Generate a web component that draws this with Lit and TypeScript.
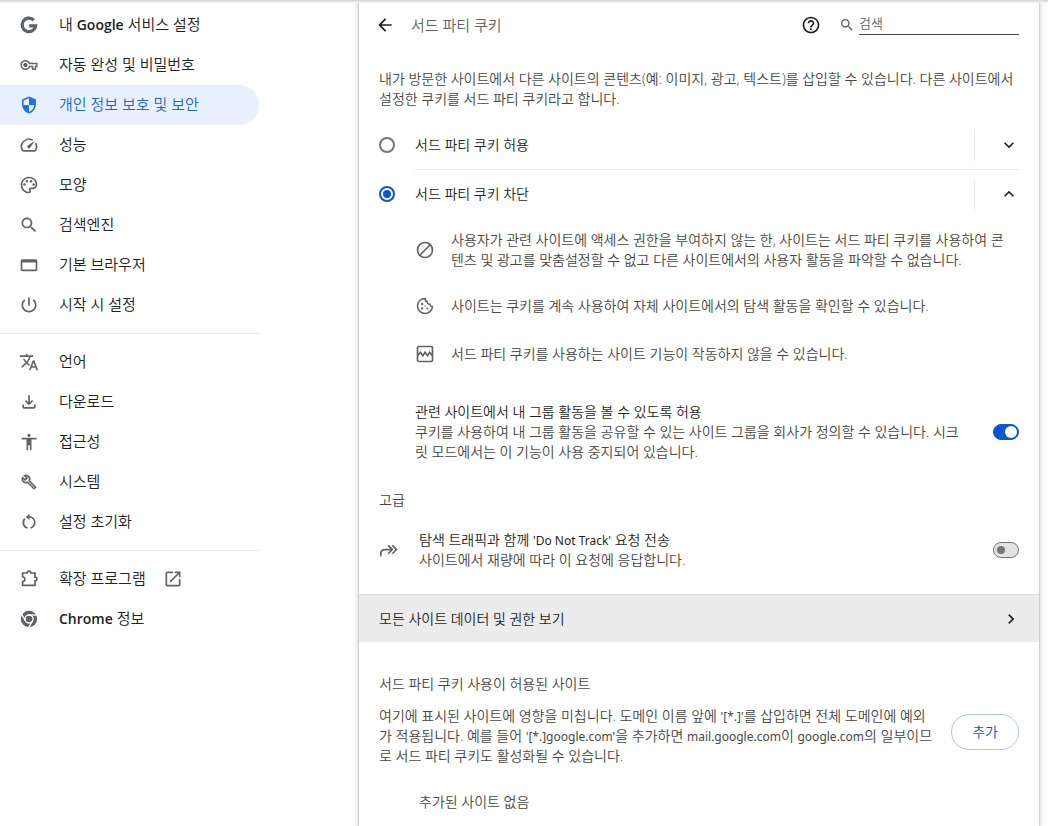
import { LitElement, html, css, svg } from "lit";
import { customElement, property, state } from "lit/decorators.js";
import { classMap } from "lit/directives/class-map.js";

const line = (d: string, width = 2) =>
  svg`<path d=${d} fill="none" stroke="currentColor" stroke-width=${width} />`;
const fill = (d: string) => svg`<path d=${d} fill="currentColor" fill-rule="evenodd" />`;

const ICONS: Record<string, { box?: string; art: unknown }> = {
  google: { art: line("M17.8 6.2A8.1 8.1 0 1 0 20 13H12.2", 3.8) },
  key: {
    box: "-2 -2 28 28",
    art: fill(
      "M22 19h-6v-4h-2.68c-1.14 2.42-3.6 4-6.32 4-3.86 0-7-3.14-7-7s3.14-7 7-7c2.72 0 5.17 1.58 6.32 4H24v6h-2v4zm-4-2h2v-4h2v-2H11.94l-.23-.67C11.01 8.34 9.11 7 7 7c-2.76 0-5 2.24-5 5s2.24 5 5 5c2.11 0 4.01-1.34 4.71-3.33l.23-.67H18v4zM7 15c-1.65 0-3-1.35-3-3s1.35-3 3-3 3 1.35 3 3-1.35 3-3 3z"
    ),
  },
  shield: {
    box: "-1 -1 26 26",
    art: fill(
      "M12 1L3 5v6c0 5.55 3.84 10.74 9 12 5.16-1.26 9-6.45 9-12V5l-9-4zm0 10.99h7c-.53 4.12-3.28 7.79-7 8.94V12H5V6.3l7-3.11v8.8z"
    ),
  },
  speed: {
    art: fill(
      "M20.38 8.57l-1.23 1.85a8 8 0 0 1-.22 7.58H5.07A8 8 0 0 1 15.58 6.85l1.85-1.23A10 10 0 0 0 3.35 19a2 2 0 0 0 1.72 1h13.85a2 2 0 0 0 1.74-1 10 10 0 0 0-.27-10.44zm-9.79 6.84a2 2 0 0 0 2.83 0l5.66-8.49-8.49 5.66a2 2 0 0 0 0 2.83z"
    ),
  },
  palette: {
    art: svg`${fill(
      "M12 22C6.49 22 2 17.51 2 12S6.49 2 12 2s10 4.04 10 9c0 3.31-2.69 6-6 6h-1.77c-.28 0-.5.22-.5.5 0 .12.05.23.13.33.41.47.64 1.06.64 1.67A2.5 2.5 0 0 1 12 22zm0-18c-4.41 0-8 3.59-8 8s3.59 8 8 8c.28 0 .5-.22.5-.5a.54.54 0 0 0-.14-.35c-.41-.46-.63-1.05-.63-1.65a2.5 2.5 0 0 1 2.5-2.5H16c2.21 0 4-1.79 4-4 0-3.86-3.59-7-8-7z"
    )}<g fill="currentColor"><circle cx="6.5" cy="11.5" r="1.5" /><circle cx="9.5" cy="7.5" r="1.5" /><circle cx="14.5" cy="7.5" r="1.5" /><circle cx="17.5" cy="11.5" r="1.5" /></g>`,
  },
  search: {
    art: fill(
      "M15.5 14h-.79l-.28-.27C15.41 12.59 16 11.11 16 9.5 16 5.91 13.09 3 9.5 3S3 5.91 3 9.5 5.91 16 9.5 16c1.61 0 3.09-.59 4.23-1.57l.27.28v.79l5 4.99L20.49 19l-4.99-5zm-6 0C7.01 14 5 11.99 5 9.5S7.01 5 9.5 5 14 7.01 14 9.5 11.99 14 9.5 14z"
    ),
  },
  browser: {
    art: fill(
      "M4 5c-1.1 0-2 .9-2 2v10.5c0 1.1.9 2 2 2h16c1.1 0 2-.9 2-2V7c0-1.1-.9-2-2-2H4zm0 4h16v8.5H4z"
    ),
  },
  power: {
    art: fill(
      "M13 3h-2v10h2V3zm4.83 2.17l-1.42 1.42C17.99 7.86 19 9.81 19 12c0 3.87-3.13 7-7 7s-7-3.13-7-7c0-2.19 1.01-4.14 2.58-5.42L6.17 5.17C4.23 6.82 3 9.26 3 12c0 4.97 4.03 9 9 9s9-4.03 9-9c0-2.74-1.23-5.18-3.17-6.83z"
    ),
  },
  translate: {
    art: fill(
      "M12.87 15.07l-2.54-2.51.03-.03c1.74-1.94 2.98-4.17 3.71-6.53H17V4h-7V2H8v2H1v1.99h11.17C11.5 7.92 10.44 9.75 9 11.35 8.07 10.32 7.3 9.19 6.69 8h-2c.73 1.63 1.73 3.17 2.98 4.56l-5.09 5.02L4 19l5-5 3.11 3.11.76-2.04zM18.5 10h-2L12 22h2l1.12-3h4.75L21 22h2l-4.5-12zm-2.62 7l1.62-4.33L19.12 17h-3.24z"
    ),
  },
  download: {
    art: fill(
      "M18 15v3H6v-3H4v3c0 1.1.9 2 2 2h12c1.1 0 2-.9 2-2v-3h-2zm-1-4l-1.41-1.41L13 12.17V4h-2v8.17L8.41 9.59 7 11l5 5 5-5z"
    ),
  },
  accessibility: {
    art: fill(
      "M12 2c1.1 0 2 .9 2 2s-.9 2-2 2-2-.9-2-2 .9-2 2-2zm9 7h-6v13h-2v-6h-2v6H9V9H3V7h18v2z"
    ),
  },
  wrench: {
    box: "-3 -3 30 30",
    art: svg`<path stroke="currentColor" stroke-width="0.6" fill="currentColor" d="M22.61 18.99l-9.08-9.08c.93-2.34.45-5.1-1.44-7C9.79.61 6.21.4 3.66 2.26L7.5 6.11 6.08 7.52 2.25 3.69C.39 6.23.6 9.82 2.9 12.11c1.86 1.86 4.57 2.35 6.89 1.48l9.11 9.11c.39.39 1.02.39 1.41 0l2.3-2.3c.4-.38.4-1.01 0-1.41zm-3 1.6l-9.46-9.46c-.61.45-1.29.72-2 .82-1.36.2-2.79-.21-3.83-1.25C3.37 9.76 2.93 8.5 3 7.26l3.09 3.09 4.24-4.24-3.09-3.09c1.24-.07 2.49.37 3.44 1.31 1.08 1.08 1.49 2.57 1.24 3.96-.12.71-.42 1.37-.88 1.96l9.45 9.45-.88.89z" />`,
  },
  reset: {
    art: svg`${line("M10.6 5.9A6.7 6.7 0 0 1 13.6 19.2M10.4 19.2A6.7 6.7 0 0 1 7 8")}${fill(
      "M12.5 2.2v7.4L8.2 5.9z"
    )}`,
  },
  extension: {
    art: line(
      "M4.3 4.8H9.6a2.3 2.3 0 0 1 4.6 0H19.2V9.7a2.3 2.3 0 0 1 0 4.6V19.7H4.3V15.2C8 14.8 8 9.7 4.3 9.3Z"
    ),
  },
  launch: {
    art: fill(
      "M19 19H5V5h7V3H5a2 2 0 0 0-2 2v14a2 2 0 0 0 2 2h14c1.1 0 2-.9 2-2v-7h-2v7zM14 3v2h3.59l-9.83 9.83 1.41 1.41L19 6.41V10h2V3h-7z"
    ),
  },
  chrome: {
    art: svg`<circle cx="12" cy="12" r="9.8" fill="currentColor" />
      <g fill="none" stroke="#fff" stroke-width="1.6">
        <circle cx="12" cy="12" r="4.8" />
        <path d="M12 7.2H21.5" /><path d="M12 7.2H21.5" transform="rotate(120 12 12)" /><path d="M12 7.2H21.5" transform="rotate(240 12 12)" />
      </g>`,
  },
  back: { art: fill("M20 11H7.83l5.59-5.59L12 4l-8 8 8 8 1.41-1.41L7.83 13H20v-2z") },
  help: {
    art: fill(
      "M11 18h2v-2h-2v2zm1-16C6.48 2 2 6.48 2 12s4.48 10 10 10 10-4.48 10-10S17.52 2 12 2zm0 18c-4.41 0-8-3.59-8-8s3.59-8 8-8 8 3.59 8 8-3.59 8-8 8zm0-14c-2.21 0-4 1.79-4 4h2c0-1.1.9-2 2-2s2 .9 2 2c0 2-3 1.75-3 5h2c0-2.25 3-2.5 3-5 0-2.21-1.79-4-4-4z"
    ),
  },
  down: { art: fill("M7.41 8.59L12 13.17l4.59-4.58L18 10l-6 6-6-6 1.41-1.41z") },
  up: { art: fill("M7.41 15.41L12 10.83l4.59 4.58L18 14l-6-6-6 6 1.41 1.41z") },
  right: { art: fill("M10 6L8.59 7.41 13.17 12l-4.58 4.59L10 18l6-6-6-6z") },
  block: {
    art: svg`<circle cx="12" cy="12" r="9" fill="none" stroke="currentColor" stroke-width="2" />${line(
      "M5.7 18.3L18.3 5.7"
    )}`,
  },
  cookie: {
    art: svg`${line(
      "M12.3 3A9 9 0 1 0 21 12.6C19 12.8 17.8 11.6 17.8 9.8 15.8 10 14.4 8.7 14.7 6.7 13 6.4 12 5 12.3 3Z",
      1.8
    )}<g fill="currentColor"><circle cx="8.5" cy="9.5" r="1.4" /><circle cx="8.5" cy="15" r="1.4" /><circle cx="14.8" cy="15" r="1.2" /><circle cx="12" cy="12" r="0.8" /></g>`,
  },
  broken: {
    art: svg`<rect x="3" y="3" width="18" height="18" rx="1.5" fill="none" stroke="currentColor" stroke-width="2" />${line(
      "M3 14l3.5-4 3 4 2.5-4 3 4 2.5-4L21 14"
    )}`,
  },
  forward: {
    art: line("M2.2 19.5V16a4.5 4.5 0 0 1 4.5-4.5H15.5M11 6.5l5 5-5 5M16 6.5l5 5-5 5"),
  },
};

const icon = (name: string, small = false) => html`<svg
  class=${classMap({ icon: true, small })}
  viewBox=${ICONS[name].box ?? "0 0 24 24"}
  aria-hidden="true"
>
  ${ICONS[name].art}
</svg>`;

const shared = css`
  * {
    box-sizing: border-box;
  }
  .icon {
    display: block;
    flex: none;
    width: 20px;
    height: 20px;
  }
  .icon.small {
    width: 16px;
    height: 16px;
  }
  .latin {
    font-family: "Noto Sans", sans-serif;
    font-size: 12px;
    font-weight: 400;
    line-height: 12px;
  }
`;

interface MenuItem {
  icon: string;
  label: unknown;
  active?: boolean;
  external?: boolean;
}

const MENU: MenuItem[][] = [
  [
    { icon: "google", label: html`내 <span class="name">Google</span> 서비스 설정` },
    { icon: "key", label: "자동 완성 및 비밀번호" },
    { icon: "shield", label: "개인 정보 보호 및 보안", active: true },
    { icon: "speed", label: "성능" },
    { icon: "palette", label: "모양" },
    { icon: "search", label: "검색엔진" },
    { icon: "browser", label: "기본 브라우저" },
    { icon: "power", label: "시작 시 설정" },
  ],
  [
    { icon: "translate", label: "언어" },
    { icon: "download", label: "다운로드" },
    { icon: "accessibility", label: "접근성" },
    { icon: "wrench", label: "시스템" },
    { icon: "reset", label: "설정 초기화" },
  ],
  [
    { icon: "extension", label: "확장 프로그램", external: true },
    { icon: "chrome", label: html`<span class="name">Chrome</span> 정보` },
  ],
];

@customElement("settings-menu")
export class SettingsMenu extends LitElement {
  static styles = [
    shared,
    css`
      :host {
        display: block;
      }
      .menu {
        max-width: 261px;
        padding-top: 5px;
      }
      .group + .group {
        margin-top: 8px;
        padding-top: 8px;
        border-top: 1px solid #e8e8e8;
      }
      .item {
        display: flex;
        align-items: center;
        height: 40px;
        margin-right: 2px;
        padding-left: 19px;
        border-radius: 0 20px 20px 0;
        color: #202124;
        font-size: 15px;
        text-decoration: none;
      }
      .item .icon {
        color: #5f6368;
      }
      .label {
        margin: 0 17px 0 20px;
        padding-bottom: 2px;
        white-space: nowrap;
      }
      .name {
        font-size: 14px;
        font-weight: 600;
      }
      .active {
        background: #e8f0fe;
        color: #1967d2;
      }
      .active .icon {
        color: #1a73e8;
      }
    `,
  ];

  render() {
    return html`<nav class="menu" aria-label="설정">
      ${MENU.map(
        (group) => html`<div class="group">
          ${group.map(
            (item) => html`<a
              href="#"
              class=${classMap({ item: true, active: !!item.active })}
              aria-current=${item.active ? "page" : "false"}
            >
              ${icon(item.icon)}
              <span class="label">${item.label}</span>
              ${item.external ? icon("launch") : ""}
            </a>`
          )}
        </div>`
      )}
    </nav>`;
  }
}

@customElement("cookie-option")
export class CookieOption extends LitElement {
  @property() label = "";
  @property({ type: Boolean }) checked = false;
  @property({ type: Boolean }) expanded = false;

  static styles = [
    shared,
    css`
      :host {
        display: flex;
        align-items: center;
        height: 48px;
      }
      .choice {
        display: flex;
        flex: 1;
        align-items: center;
        gap: 20px;
        color: #1f1f1f;
      }
      .radio {
        display: grid;
        flex: none;
        place-items: center;
        appearance: none;
        width: 16px;
        height: 16px;
        margin: 0;
        border: 2px solid #747775;
        border-radius: 50%;
      }
      .radio:checked {
        border-color: #0b57d0;
      }
      .radio:checked::before {
        content: "";
        width: 8px;
        height: 8px;
        border-radius: 50%;
        background: #0b57d0;
      }
      .expand {
        display: flex;
        align-items: center;
        justify-content: flex-end;
        width: 45px;
        height: 32px;
        padding: 0;
        border: 0;
        border-left: 1px solid #ebebeb;
        background: none;
        color: #1f1f1f;
      }
    `,
  ];

  render() {
    return html`<label class="choice">
        <input class="radio" type="radio" name="cookies" .checked=${this.checked} />
        <span>${this.label}</span>
      </label>
      <button class="expand" aria-label=${this.label} aria-expanded=${this.expanded}>
        ${icon(this.expanded ? "up" : "down")}
      </button>`;
  }
}

@customElement("app-root")
export class AppRoot extends LitElement {
  @state() private relatedSites = true;
  @state() private doNotTrack = false;

  static styles = [
    shared,
    css`
      :host {
        display: flex;
        position: relative;
        min-height: 100vh;
        padding-right: 9px;
        background: #fff;
        color: #474747;
        font-family: "Open Sans", "Noto Sans CJK KR", sans-serif;
        font-size: 14px;
        font-weight: 350;
        line-height: 20px;
      }
      :host::before {
        content: "";
        position: absolute;
        inset: 0 0 auto;
        height: 3px;
        background: linear-gradient(#d4d4d4, #f6f6f6);
      }
      settings-menu {
        flex: 1 0 266px;
      }
      .card {
        flex: 0 1 680px;
        box-shadow: 0 0 2px rgba(60, 64, 67, 0.5), 0 2px 6px 2px rgba(60, 64, 67, 0.15);
      }
      .header {
        display: flex;
        align-items: center;
        height: 50px;
        padding: 0 20px 0 16px;
      }
      .plain {
        padding: 0;
        border: 0;
        background: none;
        color: #1f1f1f;
      }
      .title {
        flex: 1;
        margin: 0 0 0 16px;
        color: #5f6368;
        font-size: 15px;
        font-weight: inherit;
      }
      .search {
        display: flex;
        align-items: center;
        gap: 4px;
        margin-left: 18px;
        color: #5f6368;
      }
      .field {
        width: 160px;
        height: 20px;
        padding: 0 0 4px;
        border: 0;
        border-bottom: 1px solid #474747;
        outline: 0;
        background: none;
        color: #1f1f1f;
        font: inherit;
        font-size: 13px;
      }
      .field::placeholder {
        color: #5f6368;
        opacity: 1;
      }
      .body {
        padding: 0 20px;
      }
      .text {
        margin: 0;
      }
      .intro {
        margin: 19px 0 12px;
      }
      .rule {
        height: 1px;
        margin: 0 0 0 36px;
        border: 0;
        background: #ebebeb;
      }
      .details {
        margin: 0;
        padding: 0 0 0 36px;
        list-style: none;
      }
      .detail {
        display: flex;
        align-items: center;
        gap: 16px;
        min-height: 48px;
        padding: 12px 8px 12px 0;
      }
      .detail .icon {
        color: #5f6368;
      }
      .setting {
        display: flex;
        align-items: center;
      }
      .related {
        padding: 24px 0 28px 36px;
      }
      .copy {
        flex: 1;
        margin-right: 28px;
      }
      .strong {
        display: block;
        color: #1f1f1f;
      }
      .sub {
        display: block;
      }
      .heading {
        margin: 0;
        color: #474747;
        font-size: 14px;
        font-weight: inherit;
      }
      .track {
        gap: 20px;
        padding: 20px 0 24px;
      }
      .track .icon {
        color: #5f6368;
      }
      .track .copy {
        margin-right: 0;
      }
      .switch {
        display: flex;
        flex: none;
        align-items: center;
        appearance: none;
        width: 26px;
        height: 16px;
        margin: 0;
        padding: 0 3px;
        border: 1px solid #747775;
        border-radius: 8px;
        background: #e1e3e1;
      }
      .switch::before {
        content: "";
        width: 8px;
        height: 8px;
        border-radius: 50%;
        background: #747775;
      }
      .switch:checked {
        justify-content: flex-end;
        padding: 0 1px;
        border-color: #0b57d0;
        background: #0b57d0;
      }
      .switch:checked::before {
        width: 12px;
        height: 12px;
        background: #fff;
      }
      .link {
        display: flex;
        align-items: center;
        justify-content: space-between;
        height: 48px;
        padding: 0 18px 0 20px;
        border-top: 1px solid #dcdcdc;
        background: #ececec;
        color: #1f1f1f;
        text-decoration: none;
      }
      .allowed {
        padding-top: 32px;
      }
      .exceptions {
        display: flex;
        align-items: flex-start;
        gap: 14px;
        margin-top: 12px;
      }
      .exceptions .text {
        flex: 1;
      }
      .add {
        flex: none;
        height: 36px;
        margin-top: 8px;
        padding: 0 20px;
        border: 1px solid #a8c7fa;
        border-radius: 18px;
        background: #fff;
        color: #0b57d0;
        font: inherit;
      }
      .empty {
        margin: 26px 40px 14px;
      }
    `,
  ];

  render() {
    return html`
      <settings-menu></settings-menu>
      <main class="card">
        <header class="header">
          <button class="plain" aria-label="뒤로">${icon("back")}</button>
          <h1 class="title">서드 파티 쿠키</h1>
          <button class="plain" aria-label="도움말">${icon("help")}</button>
          <label class="search">
            ${icon("search", true)}
            <input class="field" type="search" placeholder="검색" aria-label="검색" />
          </label>
        </header>
        <div class="body">
          <p class="text intro">
            내가 방문한 사이트에서 다른 사이트의 콘텐츠(예: 이미지, 광고, 텍스트)를 삽입할 수 있습니다. 다른 사이트에서 설정한 쿠키를 서드 파티 쿠키라고 합니다.
          </p>
          <cookie-option label="서드 파티 쿠키 허용"></cookie-option>
          <hr class="rule" />
          <cookie-option label="서드 파티 쿠키 차단" checked expanded></cookie-option>
          <ul class="details">
            <li class="detail">
              ${icon("block")}
              <span>사용자가 관련 사이트에 액세스 권한을 부여하지 않는 한, 사이트는 서드 파티 쿠키를 사용하여 콘텐츠 및 광고를 맞춤설정할 수 없고 다른 사이트에서의 사용자 활동을 파악할 수 없습니다.</span>
            </li>
            <li class="detail">
              ${icon("cookie")}
              <span>사이트는 쿠키를 계속 사용하여 자체 사이트에서의 탐색 활동을 확인할 수 있습니다.</span>
            </li>
            <li class="detail">
              ${icon("broken")}
              <span>서드 파티 쿠키를 사용하는 사이트 기능이 작동하지 않을 수 있습니다.</span>
            </li>
          </ul>
          <label class="setting related">
            <span class="copy">
              <span class="strong">관련 사이트에서 내 그룹 활동을 볼 수 있도록 허용</span>
              <span class="sub">쿠키를 사용하여 내 그룹 활동을 공유할 수 있는 사이트 그룹을 회사가 정의할 수 있습니다. 시크릿 모드에서는 이 기능이 사용 중지되어 있습니다.</span>
            </span>
            <input
              class="switch"
              type="checkbox"
              role="switch"
              .checked=${this.relatedSites}
              @change=${() => (this.relatedSites = !this.relatedSites)}
            />
          </label>
          <h2 class="heading">고급</h2>
          <label class="setting track">
            ${icon("forward")}
            <span class="copy">
              <span class="strong">탐색 트래픽과 함께 <span class="latin">'Do Not Track'</span> 요청 전송</span>
              <span class="sub">사이트에서 재량에 따라 이 요청에 응답합니다.</span>
            </span>
            <input
              class="switch"
              type="checkbox"
              role="switch"
              .checked=${this.doNotTrack}
              @change=${() => (this.doNotTrack = !this.doNotTrack)}
            />
          </label>
        </div>
        <a class="link" href="#"><span>모든 사이트 데이터 및 권한 보기</span>${icon("right")}</a>
        <section class="body allowed">
          <h2 class="heading">서드 파티 쿠키 사용이 허용된 사이트</h2>
          <div class="exceptions">
            <p class="text">
              여기에 표시된 사이트에 영향을 미칩니다. 도메인 이름 앞에 <span class="latin">'[*.]'</span>를 삽입하면 전체 도메인에 예외가 적용됩니다. 예를 들어 <span class="latin">'[*.]google.com'</span>을 추가하면 <span class="latin">mail.google.com</span>이 <span class="latin">google.com</span>의 일부이므로 서드 파티 쿠키도 활성화될 수 있습니다.
            </p>
            <button class="add">추가</button>
          </div>
          <p class="text empty">추가된 사이트 없음</p>
        </section>
      </main>
    `;
  }
}
